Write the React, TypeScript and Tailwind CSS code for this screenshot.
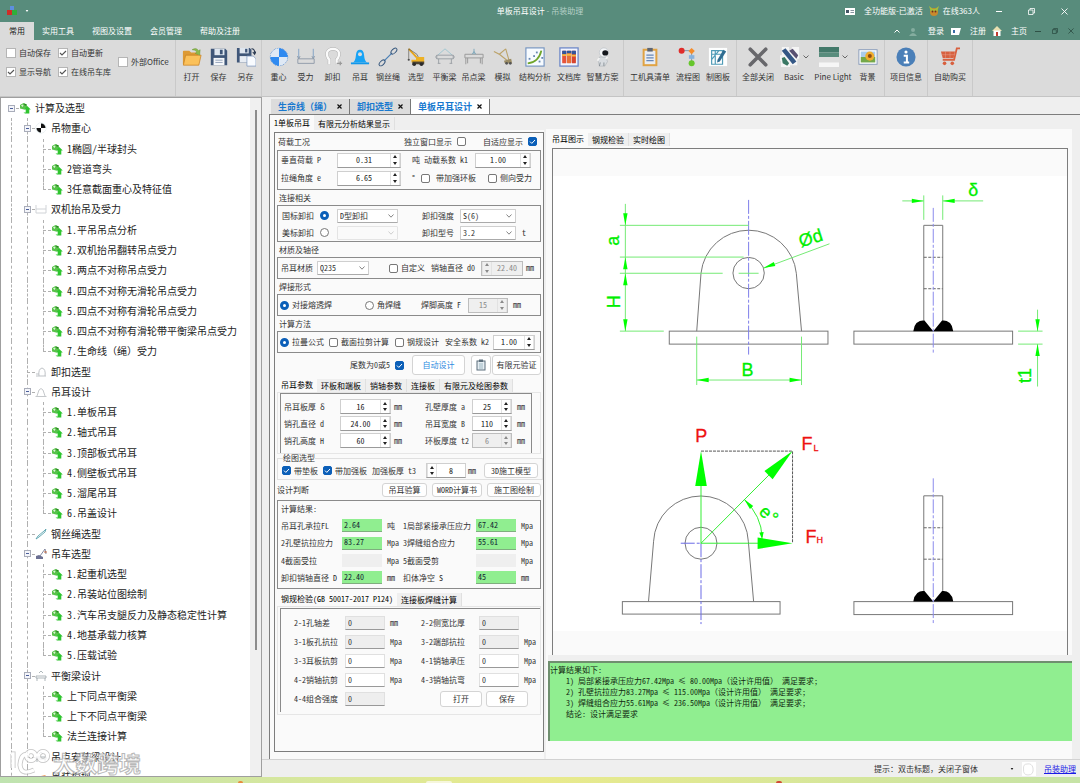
import React from "react";

type Kids = { children?: React.ReactNode };

/* ---------- ribbon icons (22 x 22 grid) ---------- */
const icons: Record<string, React.ReactNode> = {
  open: (
    <>
      <path d="M1 5 Q1 4 2 4 H8 L10 6 H18 V19 H1Z" fill="#dd9a34" />
      <path d="M4 9 H21 L18.500 20 H1.500Z" fill="#fbc15a" stroke="#c98222" strokeWidth=".8" />
      <path d="M11 3 Q16 0 18 4 L20 3 L19.500 9 L14.500 7 L16.500 5.500 Q14.500 3 11 3Z" fill="#8cba4e" stroke="#5d8a2c" strokeWidth=".4" />
    </>
  ),
  save: (
    <>
      <path d="M2 2 H18 L20 4 V20 H2Z" fill="#3f5678" />
      <rect x="6" y="2" width="11" height="7" fill="#dfe6ef" />
      <rect x="12" y="3" width="3" height="5" fill="#3f5678" />
      <rect x="5" y="12" width="12" height="8" fill="#f4f6f9" />
      <path d="M7 14.500 H15 M7 17 H15" stroke="#8fa0b8" />
    </>
  ),
  saveas: (
    <>
      <path d="M1 1 H15 L17 3 V17 H1Z" fill="#3f5678" />
      <rect x="4" y="1" width="10" height="6" fill="#dfe6ef" />
      <rect x="10" y="2" width="2.500" height="4" fill="#3f5678" />
      <rect x="4" y="10" width="9" height="7" fill="#e7ecf3" />
      <path d="M12 10 H19 L22 13 V21 H12Z" fill="#f8fbff" stroke="#7b95bd" strokeWidth=".8" />
      <path d="M17 2 Q21 2 20.500 7 M18.500 5.500 L20.500 8 L22 5" fill="none" stroke="#27364e" strokeWidth="1.200" />
    </>
  ),
  center: (
    <>
      <circle cx="11" cy="11" r="9.500" fill="#f2f6fb" stroke="#3f7fd0" strokeDasharray="2 1" />
      <path d="M11 11 V1.500 A9.500 9.500 0 0 0 1.500 11Z M11 11 V20.500 A9.500 9.500 0 0 0 20.500 11Z" fill="#dfe9f5" />
      <path d="M11 11 V1.500 A9.500 9.500 0 0 1 20.500 11Z M11 11 V20.500 A9.500 9.500 0 0 1 1.500 11Z" fill="#2f8af0" />
    </>
  ),
  force: (
    <g fill="none" stroke="#8d99a8" strokeWidth="1">
      <path d="M2 13 H20 V18 H2Z" />
      <path d="M3 2 V13 M19 2 V13" stroke="#7ea0c4" />
      <path d="M1.500 10 L3 13 L4.500 10 M17.500 10 L19 13 L20.500 10" />
    </g>
  ),
  shackle: (
    <>
      <path d="M7 19 V14 Q3.500 10 4.500 6 Q6 2 11 2 Q16 2 17.500 6 Q18.500 10 15 14 V19" fill="none" stroke="#b0b0b0" strokeWidth="3.600" />
      <path d="M7 19 V14 Q3.500 10 4.500 6 Q6 2 11 2 Q16 2 17.500 6 Q18.500 10 15 14 V19" fill="none" stroke="#fafafa" strokeWidth="2.600" />
      <path d="M15 18 H21 M19 16 V20" stroke="#9a9a9a" strokeWidth="1.500" />
    </>
  ),
  lug: (
    <>
      <path d="M1 17 H21 V19 H1Z" fill="#1297ea" />
      <path d="M3 17 Q6 16 6.500 9 Q7 3 11 3 Q15 3 15.500 9 Q16 16 19 17Z" fill="#18a3f5" />
      <circle cx="11" cy="8" r="2.200" fill="#dbdbdb" />
    </>
  ),
  rope: (
    <g fill="none" stroke="#36577d" strokeWidth="1.100">
      <path d="M6.500 15.500 L15.500 6.500" stroke="#4b7fb5" strokeWidth="1.400" />
      <ellipse cx="17.500" cy="4.500" rx="4" ry="2.200" transform="rotate(-45 17.500 4.500)" />
      <ellipse cx="4.500" cy="17.500" rx="4" ry="2.200" transform="rotate(-45 4.500 17.500)" />
    </g>
  ),
  crane: (
    <>
      <path d="M3 2 L15 15" stroke="#e7a51b" strokeWidth="2" />
      <path d="M3 2 L12 8 L15 14 M3 2 V13" stroke="#55534b" strokeWidth=".7" fill="none" />
      <path d="M6 14 H11 V11 H20 V17 H6Z" fill="#edb125" />
      <rect x="7" y="16" width="13" height="3" fill="#4d4536" />
      <circle cx="9" cy="19" r="2" fill="#2b2b2b" />
      <circle cx="17" cy="19" r="2" fill="#2b2b2b" />
      <circle cx="3" cy="14" r="1.200" fill="#4c4c4c" />
    </>
  ),
  beam: (
    <g fill="none" stroke="#989ea3">
      <path d="M3 9 L11 2 L19 9" stroke="#9cc5cf" />
      <path d="M2 9 H20 V13 H2Z M2 9 Q-.500 11 2 13 M20 9 Q22.500 11 20 13 M4 13 V18 M18 13 V18 M3 18 H6 M16 18 H19" />
    </g>
  ),
  pointbeam: (
    <g fill="none" stroke="#9b9b9b" strokeWidth="1.100">
      <path d="M1 8 H21 V12 H1Z M2 12 V19 M4 12 V18 M20 12 V19 M18 12 V18" />
      <path d="M11 2 V8 M9 8 L11 5 L13 8" stroke="#80a9bb" />
    </g>
  ),
  simulate: (
    <>
      <path d="M1 5 L7 8 L14 2 M7 8 L17 16 M14 2 L18 16" stroke="#bca36a" strokeWidth="1.200" fill="none" />
      <path d="M12 15 L20 13 L21 18 L13 18Z" fill="#9a8c65" />
      <circle cx="15" cy="18" r="1.500" fill="#545454" />
      <circle cx="19" cy="18" r="1.500" fill="#545454" />
    </>
  ),
  chart: (
    <>
      <rect x="1" y="1" width="20" height="20" fill="#f7fbff" stroke="#6e8fbd" strokeWidth="1.200" />
      <path d="M3 18 Q15 17 18 4" fill="none" stroke="#70a52c" strokeWidth="2" />
      <g fill="#6788b2">
        <rect x="4" y="12" width="2" height="2" /><rect x="9" y="9" width="2" height="2" />
        <rect x="12" y="5" width="2" height="2" /><rect x="15" y="15" width="2" height="2" />
        <rect x="18" y="11" width="2" height="2" />
      </g>
    </>
  ),
  library: (
    <>
      <rect x="1" y="1" width="20" height="20" fill="#f1f5ff" stroke="#6c87c7" strokeWidth="1.400" />
      <rect x="3.500" y="4" width="4.600" height="14" rx="1" fill="#e6543b" />
      <rect x="8.800" y="4" width="4.600" height="14" rx="1" fill="#e6703b" />
      <rect x="14" y="4" width="4.600" height="14" rx="1" fill="#d7452f" />
      <path d="M3.500 4 H8.100 V8 H3.500Z M8.800 4 H13.400 V7 H8.800Z M14 4 H18.600 V8 H14Z" fill="#31569e" />
      <path d="M3.500 9 H8.100 M8.800 8.500 H13.400 M14 9.500 H18.600" stroke="#f5ba42" strokeWidth="2" />
    </>
  ),
  robot: (
    <>
      <path d="M7 11 H14 L16 16 L13 21 H7 L6 16Z" fill="#d8dce0" stroke="#a7adb4" strokeWidth=".6" />
      <circle cx="12" cy="6" r="5" fill="#f4f6f8" stroke="#b2b8be" strokeWidth=".6" />
      <ellipse cx="13.500" cy="6.500" rx="3.300" ry="2.800" fill="#15181d" />
      <path d="M7 12 L5 15 M14 13 L16 11" stroke="#f3f3f3" strokeWidth="2" />
      <path d="M8 17 L7 21 M12 17 V21" stroke="#858c93" />
    </>
  ),
  clipboard: (
    <>
      <rect x="4" y="3" width="14" height="17" fill="#e9edf3" stroke="#e0a344" strokeWidth="2.200" />
      <rect x="8" y="1" width="6" height="4" fill="#5f6672" />
      <path d="M7 9 H15 M7 12 H15 M7 15 H15" stroke="#6788b8" strokeWidth="1.500" />
    </>
  ),
  flow: (
    <>
      <path d="M5 4 H15 V18" stroke="#7a8da5" fill="none" />
      <circle cx="4" cy="4" r="3.300" fill="#e02c2a" />
      <path d="M15 1 L18.500 4.500 L15 8 L11.500 4.500Z" fill="#f58c2b" />
      <rect x="12" y="9" width="6" height="4" fill="#86b2df" />
      <circle cx="15" cy="18" r="3.300" fill="#66c62c" />
    </>
  ),
  draft: (
    <>
      <rect x="1" y="1" width="20" height="20" fill="#fdfefe" />
      <path d="M4 4 H16 V19 H4Z M4 8 H16 M8 4 V19 M4 14 L12 4" fill="none" stroke="#4f9bb6" strokeWidth="1.300" />
      <path d="M17 3 L20 5 L13 16 L10 17 L10.500 14Z" fill="#2f6c91" />
    </>
  ),
  closeall: <path d="M2.500 2.500 L19.500 19.500 M19.500 2.500 L2.500 19.500" stroke="#68686c" strokeWidth="4" strokeLinecap="round" />,
  basic: (
    <>
      <path d="M2 0 H10 V3 H13 V0 H21 V13 H19 V20 H11 V22 H1 V15 H0 V9 H2Z" fill="#f5f5f5" />
      <path d="M2 4 L6 1.500 L18 16 L14 19Z" fill="#345785" />
      <path d="M10 4 L14 2 L20 9 L18 13Z" fill="#595071" />
      <path d="M2 12 L5 11 L10 18 L8 20.500 L3 18Z" fill="#3a7864" />
    </>
  ),
  theme: (
    <>
      <rect x="0" y="0" width="22" height="6" fill="#43796a" />
      <rect x="0" y="6" width="22" height="5" fill="#588c7c" />
      <rect x="0" y="11" width="22" height="6" fill="#dddddd" />
      <rect x="0" y="17" width="22" height="5" fill="#f6f6f6" />
    </>
  ),
  background: (
    <>
      <rect x="1" y="3" width="20" height="16" fill="#fff" stroke="#8296b7" />
      <rect x="3" y="5" width="16" height="6" fill="#a9ccec" />
      <rect x="3" y="11" width="16" height="6" fill="#74a84a" />
      <circle cx="13" cy="10" r="5" fill="#f0ad2e" />
      <circle cx="13" cy="10" r="2.200" fill="#8b4c16" />
    </>
  ),
  info: (
    <>
      <circle cx="11" cy="11" r="10.500" fill="#4a7fb8" />
      <circle cx="11" cy="5.500" r="1.700" fill="#fff" />
      <path d="M8.500 9.500 H12 V16 M8.500 17 H14.500" stroke="#fff" strokeWidth="2.200" fill="none" />
    </>
  ),
  cart: (
    <>
      <path d="M22 1.500 H18.500 L15.500 14 H3" fill="none" stroke="#d8603f" strokeWidth="2" />
      <path d="M1 5 H16.500 L15 12 H3Z" fill="#d8603f" />
      <path d="M1 8.500 H16 M6 5 V12 M11 5 V12" stroke="#e9a894" strokeWidth=".5" />
      <circle cx="5" cy="18" r="2" fill="#d8603f" />
      <circle cx="13.500" cy="18" r="2" fill="#d8603f" />
    </>
  ),
};

function Icon({ name }: { name: string }) {
  return (
    <svg viewBox="0 0 22 22" className="size-5" aria-hidden="true">
      {icons[name]}
    </svg>
  );
}

function Tool({ icon, label, width, menu }: { icon: string; label: string; width: string; menu?: boolean }) {
  return (
    <button type="button" className={`flex shrink-0 flex-col items-center gap-1 whitespace-nowrap ${width}`}>
      <span className="flex items-center gap-[3px]">
        <Icon name={icon} />
        {menu && (
          <svg viewBox="0 0 6 4" className="h-1 w-[6px]" aria-hidden="true">
            <path d="M.5 .5 L3 3 L5.500 .5" fill="none" stroke="#666" />
          </svg>
        )}
      </span>
      <span className="leading-[12px]">{label}</span>
    </button>
  );
}

const ToolGroup = ({ children }: Kids) => (
  <div className="flex items-start border-r border-[#c9c9c9] px-[3px] pt-[7px]">{children}</div>
);

function RibbonCheck({ id, label, on }: { id: string; label: string; on?: boolean }) {
  return (
    <span className="flex items-center gap-[3px] whitespace-nowrap">
      <span className="relative flex size-[10px]">
        <input id={id} type="checkbox" defaultChecked={on} className="peer size-[10px] appearance-none border border-[#b5b5b5] bg-white" />
        <svg viewBox="0 0 10 10" className="pointer-events-none absolute inset-0 hidden peer-checked:block" aria-hidden="true">
          <path d="M2 5 L4 7 L8 3" fill="none" stroke="#555" strokeWidth="1.100" />
        </svg>
      </span>
      <label htmlFor={id}>{label}</label>
    </span>
  );
}

/* ---------- form parts ---------- */
function L({ f, w = "", children }: { f: string; w?: string } & Kids) {
  return <label htmlFor={f} className={`shrink-0 whitespace-pre ${w}`}>{children}</label>;
}

const T = ({ w = "", children }: { w?: string } & Kids) => <span className={`shrink-0 whitespace-pre ${w}`}>{children}</span>;

function Num({ id, v, w, off, left }: { id: string; v: string; w: string; off?: boolean; left?: boolean }) {
  const tone = off ? "border-[#bdbdbd] bg-[#efefef] text-[#8a8a8a]" : "border-[#cfcfcf] border-b-[#9a9a9a] bg-white text-[#222]";
  return (
    <span className={`flex h-[15px] shrink-0 items-stretch border ${tone} ${left ? "flex-row-reverse" : ""} ${w}`}>
      <input id={id} type="text" defaultValue={v} disabled={off} className="w-0 min-w-0 flex-1 text-center" />
      <span className="flex w-[10px] flex-col border-x border-[#e2e2e2]">
        <button type="button" disabled={off} aria-label="增加" className="flex flex-1 items-center justify-center">
          <svg viewBox="0 0 4 3" className="h-[3px] w-1" aria-hidden="true"><path d="M0 3 L2 0 L4 3Z" fill="currentColor" /></svg>
        </button>
        <button type="button" disabled={off} aria-label="减少" className="flex flex-1 items-center justify-center">
          <svg viewBox="0 0 4 3" className="h-[3px] w-1" aria-hidden="true"><path d="M0 0 L2 3 L4 0Z" fill="currentColor" /></svg>
        </button>
      </span>
    </span>
  );
}

function Pick({ id, v, w, off }: { id: string; v: string; w: string; off?: boolean }) {
  return (
    <span className={`relative flex h-[14px] shrink-0 ${w}`}>
      <select id={id} disabled={off} className={`w-full appearance-none rounded-[1px] border pl-[2px] ${off ? "border-[#e4e4e4] bg-[#fafafa]" : "border-[#cfcfcf] border-b-[#aaa] bg-white"}`}>
        <option>{v}</option>
      </select>
      <svg viewBox="0 0 6 4" className={`pointer-events-none absolute top-[5px] right-1 h-1 w-[6px] ${off ? "text-[#c4c4c4]" : "text-[#666]"}`} aria-hidden="true">
        <path d="M.5 .5 L3 3.200 L5.500 .5" fill="none" stroke="currentColor" strokeWidth=".8" />
      </svg>
    </span>
  );
}

function Check({ id, on }: { id: string; on?: boolean }) {
  return (
    <span className="relative flex size-[9px] shrink-0">
      <input id={id} type="checkbox" defaultChecked={on} className="peer size-[9px] appearance-none rounded-[2px] border border-[#777] bg-white checked:border-[#0b5fb8] checked:bg-[#0b5fb8]" />
      <svg viewBox="0 0 9 9" className="pointer-events-none absolute inset-0 hidden peer-checked:block" aria-hidden="true">
        <path d="M2 4.600 L3.800 6.400 L7 3" fill="none" stroke="#fff" strokeWidth="1" />
      </svg>
    </span>
  );
}

function Radio({ id, name, on }: { id: string; name: string; on?: boolean }) {
  return (
    <input id={id} name={name} type="radio" defaultChecked={on} className="size-[9px] shrink-0 appearance-none rounded-full border border-[#777] bg-white checked:border-[3px] checked:border-[#0b5fb8]" />
  );
}

const Btn = ({ w, children }: { w: string } & Kids) => (
  <button type="button" className={`flex shrink-0 items-center justify-center whitespace-nowrap rounded-[3px] border border-[#d4d4d4] bg-white ${w}`}>{children}</button>
);

const Title = ({ children }: Kids) => <h3 className="flex h-[15px] items-center px-[2px]">{children}</h3>;

const Box = ({ children, className = "" }: { className?: string } & Kids) => (
  <div className={`border border-[#8a8a8a] ${className}`}>{children}</div>
);

const Row = ({ children, className = "h-[17px]" }: { className?: string } & Kids) => (
  <div className={`flex items-center ${className}`}>{children}</div>
);

function Tabs({ items, label }: { items: string[]; label: string }) {
  return (
    <div role="tablist" aria-label={label} className="flex h-[15px] items-end">
      {items.map((t, i) => (
        <button key={t} role="tab" type="button" aria-selected={i === 0} className={`whitespace-pre px-1 text-black ${i === 0 ? "h-[15px] bg-[#fafafa]" : "h-[13px] border-r border-[#e0e0e0] bg-[#efefef]"}`}>
          {t}
        </button>
      ))}
    </div>
  );
}

function Result({ id, v, w = "w-10" }: { id: string; v: string; w?: string }) {
  return (
    <input id={id} readOnly defaultValue={v} className={`h-[13px] shrink-0 pl-[2px] pb-[2px] text-[#123] ${w} ${v ? "border-b border-[#7fae7f] bg-[#90ee90]" : "bg-[#efefef]"}`} />
  );
}

function Plain({ id, w = "w-10", off }: { id: string; w?: string; off?: boolean }) {
  return (
    <input id={id} defaultValue="0" readOnly={off} className={`h-[14px] shrink-0 border border-[#e0e0e0] border-b-[#999] pl-[2px] ${w} ${off ? "bg-[#eeeeee]" : "bg-white"}`} />
  );
}

/* ---------- navigation tree ---------- */
type Node = { level: number; text: string; icon?: string; last?: boolean };
const leafs = (list: string[]): Node[] => list.map((text, i) => ({ level: 2, text, last: i === list.length - 1 }));
const tree: Node[] = [
  { level: 0, text: "计算及选型" },
  { level: 1, text: "吊物重心", icon: "cg" },
  ...leafs(["1椭圆/半球封头", "2管道弯头", "3任意截面重心及特征值"]),
  { level: 1, text: "双机抬吊及受力", icon: "force" },
  ...leafs(["1.平吊吊点分析", "2.双机抬吊翻转吊点受力", "3.两点不对称吊点受力", "4.四点不对称无滑轮吊点受力", "5.四点不对称有滑轮吊点受力", "6.四点不对称有滑轮带平衡梁吊点受力", "7.生命线（绳）受力"]),
  { level: 1, text: "卸扣选型", icon: "shackle", last: true },
  { level: 1, text: "吊耳设计", icon: "lug" },
  ...leafs(["1.单板吊耳", "2.轴式吊耳", "3.顶部板式吊耳", "4.侧壁板式吊耳", "5.溜尾吊耳", "6.吊盖设计"]),
  { level: 1, text: "钢丝绳选型", icon: "rope", last: true },
  { level: 1, text: "吊车选型", icon: "crane" },
  ...leafs(["1.起重机选型", "2.吊装站位图绘制", "3.汽车吊支腿反力及静态稳定性计算", "4.地基承载力核算", "5.压载试验"]),
  { level: 1, text: "平衡梁设计", icon: "beam" },
  ...leafs(["上下同点平衡梁", "上下不同点平衡梁", "法兰连接计算"]),
  { level: 1, text: "吊点安装梁设计", icon: "beam", last: true },
  { level: 1, text: "吊装模拟", icon: "sim", last: true },
];

function TreeIcon({ kind }: { kind?: string }) {
  return (
    <svg viewBox="0 0 12 12" className="size-3 shrink-0" aria-hidden="true">
      {!kind && (
        <>
          <path d="M1 3 L4.500 1 L8 2.500 V5 L5 7.500 L1 6.500Z" fill="#58c24a" />
          <path d="M2 3.500 L3.500 2.500 L4.500 3.500 L3.500 5Z" fill="#d9f3d4" />
          <path d="M5 1.500 L7.500 2.500 L6 4Z" fill="#267a22" />
          <path d="M8.200 4 L11.800 7.600 H10.300 V11.500 H6 L4.500 10.500 H6.700 V7.600 H4.800Z" fill="#2fc42f" />
        </>
      )}
      {kind === "cg" && (
        <>
          <circle cx="6" cy="6" r="5" fill="#fff" stroke="#c9dbe0" strokeWidth=".6" />
          <path d="M6 6 V1 A5 5 0 0 0 1 6Z M6 6 V11 A5 5 0 0 0 11 6Z" fill="#fff" />
          <path d="M6 6 V1.500 A4.500 4.500 0 0 1 10.500 6Z M6 6 V10.500 A4.500 4.500 0 0 1 1.500 6Z" fill="#111" />
        </>
      )}
      {kind === "force" && <path d="M1 2 V10 H11 V2 M1 6 H11" fill="none" stroke="#d0d3d7" />}
      {kind === "shackle" && <path d="M4 10 Q3 3 7 2 Q11 3 10 10 M1 10 H11 M1 8 H4" fill="none" stroke="#bfc3c7" />}
      {kind === "lug" && <path d="M.5 10.500 H11.500 M2 10 L4 4 Q6 1 8 4 L10 10" fill="none" stroke="#c5c8cb" />}
      {kind === "rope" && <path d="M1 11 L3 8 L9 3 L11 1 L10 4 L4 9Z" fill="none" stroke="#5aa3ae" strokeWidth=".9" />}
      {kind === "crane" && (
        <>
          <path d="M5 8 L10 1 L11 6" fill="none" stroke="#666b86" strokeWidth=".8" />
          <path d="M1 8 L4 7 L8 9 V11 H1Z" fill="#6b6f92" />
          <path d="M9 4 H12" stroke="#c9683d" />
        </>
      )}
      {kind === "beam" && <path d="M4 3 L6 1 L8 3 M1 6 H11 V8 H1Z M2 8 V11 M10 8 V11" fill="none" stroke="#8c9a9e" strokeWidth=".7" />}
      {kind === "sim" && <path d="M2 10 L6 5 L11 4 L7 8Z" fill="#f08a3a" />}
    </svg>
  );
}

const V = ({ short }: { short?: boolean }) => (
  <span className={`absolute top-0 left-1/2 border-l border-dashed border-[#b0b0b0] ${short ? "h-1/2" : "h-full"}`} />
);

function TreeRow({ n }: { n: Node }) {
  const expandable = n.level < 2 && !n.last;
  return (
    <li className="flex items-center whitespace-nowrap">
      {n.level > 0 && <span className="relative h-full w-4"><V /></span>}
      {n.level > 1 && <span className="relative h-full w-4"><V /></span>}
      <span className="relative flex h-full w-4 items-center justify-center">
        {n.level > 0 && <V short={n.level === 2 && n.last} />}
        <span className="absolute top-1/2 left-1/2 w-2 border-t border-dashed border-[#b0b0b0]" />
        {expandable && (
          <button type="button" aria-label={`折叠 ${n.text}`} className="relative flex size-[7px] items-center justify-center border border-[#a9adba] bg-[#f4f5fa]">
            <span className="h-px w-[3px] bg-[#4b5f9b]" />
          </button>
        )}
      </span>
      <TreeIcon kind={n.icon} />
      <a href="#" className="pl-1">{n.text}</a>
    </li>
  );
}

/* ---------- drawing ---------- */
function Tri({ x, y, a = 0, l = 12, h = 2.2 }: { x: number; y: number; a?: number; l?: number; h?: number }) {
  return <path d={`M0 0 L${-l} ${-h} L${-l} ${h}Z`} transform={`translate(${x} ${y}) rotate(${a})`} fill="#00ff00" />;
}

function SideView({ top, base }: { top: number; base: number }) {
  return (
    <g>
      <rect x="854.500" y={base} width="159" height="13" fill="none" stroke="#777" />
      <path d={`M924.500 ${base - 11} V${top} H943.500 V${base - 11}`} fill="none" stroke="#777" />
      <path d={`M924.500 ${top + 32} H943.500 M924.500 ${top + 63.500} H943.500`} stroke="#666" strokeDasharray="3 1.500" />
      <path d={`M914 ${base} Q915 ${base - 11} 925 ${base - 11} L934 ${base} L943 ${base - 11} Q953 ${base - 11} 954 ${base}Z`} fill="#000" />
      <path d={`M934 ${top - 17.500} V${base + 23}`} stroke="#8c8cec" strokeDasharray="14 2 3 2" />
    </g>
  );
}

function Drawing() {
  return (
    <svg viewBox="553 149 515 505" className="size-full" role="img" aria-label="吊耳图示" fontFamily='"Liberation Sans", Arial, sans-serif'>
      <rect x="553" y="175" width="515" height="456" fill="#fff" />
      <g fill="none" stroke="#777">
        <rect x="669.500" y="330.500" width="159" height="13" />
        <path d="M697 330.500 L701.300 272.500 A48 48 0 0 1 796.800 272.500 L802 330.500" />
        <circle cx="749" cy="272.300" r="15.700" />
        <rect x="622.500" y="601.500" width="158" height="12.500" />
        <path d="M648.700 601.500 L653.800 541 A47.500 47.500 0 0 1 748.700 541 L754 601.500" />
        <circle cx="701.300" cy="543" r="16" />
        <path d="M701.300 450.700 H793 V543" stroke="#555" strokeDasharray="3 1" />
      </g>
      <path d="M749 199 V354" stroke="#7d7dea" strokeDasharray="14 2 3 2" />
      <path d="M701.300 543 V624 M681 543 H701" stroke="#6a6ae6" strokeDasharray="14 2 3 2" />
      <SideView top={224.5} base={330.5} />
      <SideView top={495.5} base={601.5} />
      <g stroke="#74ea74" fill="none">
        <path d="M625.500 203 V330.500 M620 224.500 H749 M620 256.300 H744 M620 272.500 H723 M739 272.500 H759 M620 330.500 H664" />
        <path d="M697 336 V384.500 M802 336 V384.500 M697 379.500 H802" />
        <path d="M830 243 L764 267.500" />
        <path d="M903 200 H924.500 M943.500 200 H984 M924.500 194.500 V219 M943.500 194.500 V219" />
        <path d="M1038.500 309 V330.500 M1038.500 343.500 V386 M1019 330.500 H1043.500 M1019 343.500 H1043.500" />
        <path d="M701.300 543 V485 M701.300 543 H759 M701.300 543 L770 474" stroke="#35ee35" />
        <path d="M744.600 499 Q762 516 762.500 537" stroke="#35ee35" />
      </g>
      <Tri x={625.5} y={224.5} a={90} /><Tri x={625.5} y={256.5} a={-90} /><Tri x={625.5} y={272.5} a={-90} /><Tri x={625.5} y={330.5} a={90} />
      <Tri x={697} y={379.5} a={180} /><Tri x={802} y={379.5} />
      <Tri x={763.7} y={267.3} a={160} />
      <Tri x={924.5} y={200} /><Tri x={943.5} y={200} a={180} />
      <Tri x={1038.5} y={330.5} a={90} /><Tri x={1038.5} y={343.5} a={-90} />
      <Tri x={701.3} y={450.7} a={-90} l={35} h={5.8} />
      <Tri x={793} y={543} l={35} h={5.8} />
      <Tri x={793} y={450.7} a={-45} l={34} h={5.8} />
      <Tri x={744.6} y={499} a={-132} l={11} /><Tri x={762.5} y={539} a={85} l={7} />
      <g fill="#00ee00" stroke="#00ee00" strokeWidth=".3" fontSize="18" textAnchor="middle">
        <text transform="translate(619 240) rotate(-90)">a</text>
        <text transform="translate(620 301) rotate(-90)">H</text>
        <text x="748" y="375">B</text>
        <text transform="translate(813 243) rotate(-18)">Ød</text>
        <text x="974" y="195">δ</text>
        <text transform="translate(1032 375) rotate(-90)">t1</text>
        <text transform="translate(762 516) rotate(45)">e</text>
        <text transform="translate(769 522) rotate(45)">°</text>
      </g>
      <g fill="#ee1111" stroke="#ee1111" strokeWidth=".3" fontSize="18">
        <text x="695.500" y="442">P</text>
        <text x="802" y="450">F</text><text x="814" y="451" fontSize="9">L</text>
        <text x="806" y="543">F</text><text x="817" y="543" fontSize="9">H</text>
      </g>
    </svg>
  );
}

const docTabs = ["生命线（绳）", "卸扣选型", "单板吊耳设计"];

export default function App() {
  return (
    <div className='flex h-screen flex-col overflow-hidden bg-[#efefef] font-["Noto_Sans_CJK_SC",sans-serif] text-[8px] leading-[10px] text-[#333]'>
      {/* title bar */}
      <header className="bg-[#588c7c] text-white">
        <div className="grid h-[22px] grid-cols-[1fr_auto_1fr] items-center">
          <div className="flex items-center gap-2 pl-[7px]">
            <svg viewBox="0 0 10 10" className="size-[10px]" aria-hidden="true">
              <rect x="3" y="0" width="4" height="4" fill="#5d8fe0" /><rect x="0" y="4" width="5" height="5" fill="#cf2d28" /><rect x="5" y="4" width="5" height="5" fill="#2fae3a" />
            </svg>
            <svg viewBox="0 0 4 3" className="h-[2px] w-1" aria-hidden="true"><path d="M0 0 H4 L2 3Z" fill="#fff" /></svg>
          </div>
          <h1>单板吊耳设计 <span className="text-[#b6d0c7]">- 吊装助理</span></h1>
          <div className="flex items-center justify-end pr-3">
            <svg viewBox="0 0 10 7" className="mr-[9px] h-[7px] w-[10px]" aria-hidden="true"><rect width="10" height="7" fill="#fff" /><path d="M1 2 H4 V5 H1Z" fill="#456" /><path d="M5.500 2.500 H9 M5.500 4.500 H9" stroke="#567" strokeWidth=".7" /></svg>
            <span className="mr-[6px]">全功能版-已激活</span>
            <svg viewBox="0 0 10 10" className="mr-1 size-[10px]" aria-hidden="true"><circle cx="5" cy="6" r="4" fill="#c98a2c" /><path d="M0 0 L4 3 L6 3 L10 0 L8 6 L2 6Z" fill="#a5bd3c" /><circle cx="3.500" cy="5.500" r="1" fill="#7d221a" /><circle cx="6.500" cy="5.500" r="1" fill="#7d221a" /></svg>
            <span className="mr-4">在线363人</span>
            <button type="button" aria-label="最小化" className="mr-[26px] h-px w-[6px] bg-white" />
            <button type="button" aria-label="还原" className="mr-[26px]">
              <svg viewBox="0 0 7 7" className="size-[7px]"><path d="M2 2 V.5 H6.500 V5 H5 M.5 2 H5 V6.500 H.5Z" fill="none" stroke="#fff" strokeWidth=".8" /></svg>
            </button>
            <button type="button" aria-label="关闭">
              <svg viewBox="0 0 7 7" className="size-[7px]"><path d="M.5 .5 L6.500 6.500 M6.500 .5 L.5 6.500" stroke="#fff" strokeWidth=".9" /></svg>
            </button>
          </div>
        </div>
        <nav className="flex h-[18px] items-center">
          <a href="#" className="flex h-full w-[34px] items-center justify-center bg-[#dbdbdb] text-[#222]">常用</a>
          <a href="#" className="ml-2">实用工具</a>
          <a href="#" className="ml-[18px]">视图及设置</a>
          <a href="#" className="ml-[18px]">会员管理</a>
          <a href="#" className="ml-[18px]">帮助及注册</a>
          <span className="ml-auto flex items-center">
            <svg viewBox="0 0 6 4" className="mr-2 h-1 w-[6px]" aria-hidden="true"><path d="M.5 3.500 L3 1 L5.500 3.500" fill="none" stroke="#fff" /></svg>
            <svg viewBox="0 0 10 10" className="mr-[10px] size-[10px]" aria-hidden="true"><circle cx="5" cy="4" r="2" fill="#84ad9f" /><path d="M1 10 Q5 4 9 10Z" fill="#84ad9f" /></svg>
            <a href="#" className="mr-[7px]">登录</a>
            <svg viewBox="0 0 10 7" className="mr-[9px] h-[7px] w-[10px]" aria-hidden="true"><path d="M0 0 H10 L8 7 H0Z" fill="#fff" /><path d="M2 2 H4 V5 H2Z" fill="#3a6ea8" /></svg>
            <a href="#" className="mr-[6px]">注册</a>
            <svg viewBox="0 0 10 10" className="mr-[9px] size-[10px]" aria-hidden="true"><path d="M0 5 L5 0 L10 5Z" fill="#e8e0b0" /><rect x="1.500" y="4.500" width="7" height="5.500" fill="#fff" /><rect x="4" y="6" width="2" height="4" fill="#c23b2f" /></svg>
            <a href="#" className="mr-2">主页</a>
            <span className="mr-[11px] h-px w-[6px] bg-[#2f5146]" />
            <svg viewBox="0 0 7 7" className="mr-[10px] size-[6px]" aria-hidden="true"><path d="M2 2 V.5 H6.500 V5 H5 M.5 2 H5 V6.500 H.5Z" fill="none" stroke="#2f5146" /></svg>
            <svg viewBox="0 0 7 7" className="mr-[6px] size-[6px]" aria-hidden="true"><path d="M.5 .5 L6.500 6.500 M6.500 .5 L.5 6.500" stroke="#2f5146" /></svg>
          </span>
        </nav>
      </header>

      {/* ribbon */}
      <div className="flex h-[57px] shrink-0 border-b border-[#c4c4c4] bg-[#dbdbdb]">
        <div className="flex w-[176px] gap-[7px] border-r border-[#c9c9c9] pl-[6px]">
          <div className="flex flex-col gap-[9px] pt-2"><RibbonCheck id="autosave" label="自动保存" /><RibbonCheck id="shownav" label="显示导航" on /></div>
          <div className="flex flex-col gap-[9px] pt-2"><RibbonCheck id="autoupd" label="自动更新" on /><RibbonCheck id="cranelib" label="在线吊车库" on /></div>
          <div className="pt-[17px]"><RibbonCheck id="office" label="外部Office" /></div>
        </div>
        <div className="flex items-start border-r border-[#c9c9c9] px-[2px] pt-[7px]">
          <Tool icon="open" label="打开" width="w-[27px]" /><Tool icon="save" label="保存" width="w-[27px]" /><Tool icon="saveas" label="另存" width="w-[27px]" />
        </div>
        <ToolGroup>
          <Tool icon="center" label="重心" width="w-[27px]" /><Tool icon="force" label="受力" width="w-[27px]" /><Tool icon="shackle" label="卸扣" width="w-[27px]" />
          <Tool icon="lug" label="吊耳" width="w-7" /><Tool icon="rope" label="钢丝绳" width="w-7" /><Tool icon="crane" label="选型" width="w-7" />
          <Tool icon="beam" label="平衡梁" width="w-[29px]" /><Tool icon="pointbeam" label="吊点梁" width="w-[29px]" /><Tool icon="simulate" label="模拟" width="w-[29px]" />
          <Tool icon="chart" label="结构分析" width="w-9" /><Tool icon="library" label="文档库" width="w-8" /><Tool icon="robot" label="智慧方案" width="w-[35px]" />
        </ToolGroup>
        <ToolGroup>
          <Tool icon="clipboard" label="工机具清单" width="w-[46px]" /><Tool icon="flow" label="流程图" width="w-[30px]" /><Tool icon="draft" label="制图板" width="w-[30px]" />
        </ToolGroup>
        <ToolGroup>
          <Tool icon="closeall" label="全部关闭" width="w-9" /><Tool icon="basic" label="Basic" width="w-9" menu /><Tool icon="theme" label="Pine Light" width="w-[42px]" menu /><Tool icon="background" label="背景" width="w-[27px]" />
        </ToolGroup>
        <ToolGroup><Tool icon="info" label="项目信息" width="w-9" /></ToolGroup>
        <ToolGroup><Tool icon="cart" label="自助购买" width="w-[38px]" /></ToolGroup>
      </div>

      <div className="flex min-h-0 flex-1">
        {/* navigation */}
        <aside className="relative flex w-[262px] shrink-0 overflow-hidden border border-[#9f9f9f] bg-white">
          <ul className='grid h-[689px] flex-1 auto-rows-fr pl-[2px] font-["Noto_Sans_Mono_CJK_SC","Noto_Sans_CJK_SC",monospace] text-[10px] text-[#222]'>
            {tree.map((n) => <TreeRow key={n.text} n={n} />)}
          </ul>
          <div className="flex w-[11px] justify-center bg-[#f0f0f0] pt-3"><span className="h-[540px] w-[2px] bg-[#8d8d8d]" /></div>
          <div className="pointer-events-none absolute bottom-0 left-2 flex items-center gap-[2px] opacity-80">
            <svg viewBox="0 0 42 28" className="h-7 w-[42px]" aria-hidden="true">
              <g fill="none" stroke="#b5b5b5" strokeWidth="5"><path d="M2 6 H4 V20 M25 22 Q12 28 11 17 Q12 4 20 7" /><circle cx="22" cy="8" r="4.500" /><circle cx="34" cy="8" r="4.500" /></g>
              <g fill="none" stroke="#fff" strokeWidth="3.400"><path d="M2 6 H4 V20 M25 22 Q12 28 11 17 Q12 4 20 7" /><circle cx="22" cy="8" r="4.500" /><circle cx="34" cy="8" r="4.500" /></g>
            </svg>
            <span className="text-[22px] leading-[26px] font-bold text-white [-webkit-text-stroke:1px_#a8a8a8]">大数跨境</span>
          </div>
        </aside>

        {/* document area */}
        <main className='flex min-w-0 flex-1 flex-col font-["Noto_Sans_Mono_CJK_SC","Noto_Sans_CJK_SC",monospace]'>
          <div role="tablist" aria-label="文档" className="flex h-[17px] shrink-0 items-end pl-[9px]">
            {docTabs.map((t, i) => (
              <span key={t} className={`flex h-[15px] items-center gap-[5px] border-r border-[#777] px-[7px] text-[9px] font-bold ${i === 2 ? "bg-white" : "bg-[#dcdcdc]"}`}>
                <button role="tab" aria-selected={i === 2} type="button" className="text-[#1879cf]">{t}</button>
                <button type="button" aria-label={`关闭${t}`} className="text-black">
                  <svg viewBox="0 0 5 5" className="size-[5px]"><path d="M.5 .5 L4.500 4.500 M4.500 .5 L.5 4.500" stroke="#111" strokeWidth="1.200" /></svg>
                </button>
              </span>
            ))}
          </div>

          <div className="ml-[7px] flex min-h-0 flex-1 border-t border-l border-[#7d7d7d]">
            {/* calculation form */}
            <section className="flex w-[274px] shrink-0 flex-col bg-[#fafafa] pl-1">
              <div className="-ml-1 bg-[#efefef]"><Tabs label="视图" items={["1单板吊耳", "有限元分析结果显示"]} /></div>
              <form className="mt-[2px] mb-[7px] flex flex-1 flex-col border border-[#7d7d7d] px-[2px]">
                <Row className="h-[17px] pl-[1px]">
                  <T w="w-[126px]">荷载工况</T>
                  <L f="alone" w="w-[53px]">独立窗口显示</L><Check id="alone" />
                  <L f="fit" w="ml-[17px] w-[45px]">自适应显示</L><Check id="fit" on />
                </Row>
                <Box className="h-10 pl-[3px]">
                  <Row className="h-[18px]"><L f="p" w="w-14">垂直荷载 P</L><Num id="p" v="0.31" w="w-16" /><T w="ml-[11px] w-3">吨</T><L f="k1" w="w-[51px]">动载系数 k1</L><Num id="k1" v="1.00" w="w-[56px]" /></Row>
                  <Row className="h-[18px]"><L f="ang" w="w-14">拉绳角度 e</L><Num id="ang" v="6.65" w="w-16" /><T w="ml-[11px] w-[9px]">°</T><Check id="ring" /><L f="ring" w="ml-[6px] w-[52px]">带加强环板</L><Check id="side" /><L f="side" w="ml-[3px]">侧向受力</L></Row>
                </Box>
                <Title>连接相关</Title>
                <Box className="h-[37px] pt-[1px] pl-1">
                  <Row><L f="gb" w="w-[38px]">国标卸扣</L><Radio id="gb" name="std" on /><span className="w-[8px]" /><Pick id="shtype" v="D型卸扣" w="w-[61px]" /><L f="grade" w="ml-[24px] w-[38px]">卸扣强度</L><Pick id="grade" v="S(6)" w="w-[56px]" /></Row>
                  <Row><L f="us" w="w-[38px]">美标卸扣</L><Radio id="us" name="std" /><span className="w-[8px]" /><Pick id="ustype" v="" w="w-[61px]" off /><L f="model" w="ml-[24px] w-[38px]">卸扣型号</L><Pick id="model" v="3.2" w="w-[56px]" /><T w="ml-[6px]">t</T></Row>
                </Box>
                <Title>材质及轴径</Title>
                <Box className="h-[22px] pl-[3px]">
                  <Row className="h-5"><L f="mat" w="w-9">吊耳材质</L><Pick id="mat" v="Q235" w="w-[52px]" /><span className="w-5" /><Check id="custom" /><L f="custom" w="ml-[3px] w-[30px]">自定义</L><L f="d0" w="w-[50px]">销轴直径 d0</L><Num id="d0" v="22.40" w="w-[42px]" off left /><T w="ml-[3px]">mm</T></Row>
                </Box>
                <Title>焊接形式</Title>
                <Box className="h-[22px] pl-[2px]">
                  <Row className="h-5"><Radio id="butt" name="weld" on /><L f="butt" w="ml-[3px] w-[73px]">对接熔透焊</L><Radio id="fillet" name="weld" /><L f="fillet" w="ml-[3px] w-[44px]">角焊缝</L><L f="leg" w="w-[47px]">焊脚高度 F</L><Num id="leg" v="15" w="w-[40px]" off /><T w="ml-[5px]">mm</T></Row>
                </Box>
                <Title>计算方法</Title>
                <Box className="h-[22px] pl-[2px]">
                  <Row className="h-5"><Radio id="lame" name="method" on /><L f="lame" w="ml-[3px] w-[37px]">拉曼公式</L><Check id="shear" /><L f="shear" w="ml-[3px] w-[54px]">截面拉剪计算</L><Check id="steel" /><L f="steel" w="ml-[3px] w-[38px]">钢规设计</L><L f="k2" w="w-[48px]">安全系数 k2</L><Num id="k2" v="1.00" w="w-[42px]" /></Row>
                </Box>
                <Row className="h-6 justify-end">
                  <L f="tail" w="mr-[5px]">尾数为0或5</L><Check id="tail" on />
                  <button type="button" className="ml-2 h-5 w-[53px] rounded-[3px] border border-[#d4d4d4] bg-white text-[#2c8ae0]">自动设计</button>
                  <button type="button" aria-label="复制结果" className="ml-[6px] flex h-5 w-5 items-center justify-center rounded-[3px] border border-[#d4d4d4] bg-white">
                    <svg viewBox="0 0 10 12" className="h-3 w-[10px]"><rect x="1" y="2" width="8" height="9" fill="#e6eef3" stroke="#5d6f7c" /><rect x="3" y=".5" width="4" height="2.500" fill="#5d6f7c" /><path d="M3 5 H7 M3 7 H7 M3 9 H7" stroke="#7fa1b0" strokeWidth=".7" /></svg>
                  </button>
                  <Btn w="ml-[1px] h-5 w-[49px]">有限元验证</Btn>
                </Row>
                <Tabs label="参数" items={["吊耳参数", "环板和端板", "销轴参数", "连接板", "有限元及绘图参数"]} />
                <div className="border border-[#e6e6e6] px-[2px]">
                  <div className="mr-[6px] border-x border-t border-[#8a8a8a] py-1 pl-[3px]">
                    <Row><L f="t" w="w-[56px]">吊耳板厚 δ</L><Num id="t" v="16" w="w-[51px]" /><T w="ml-[3px] w-[31px]">mm</T><L f="a" w="w-[47px]">孔壁厚度 a</L><Num id="a" v="25" w="w-10" /><T w="ml-[5px]">mm</T></Row>
                    <Row><L f="d" w="w-[56px]">销孔直径 d</L><Num id="d" v="24.00" w="w-[51px]" /><T w="ml-[3px] w-[31px]">mm</T><L f="b" w="w-[47px]">吊耳宽度 B</L><Num id="b" v="110" w="w-10" /><T w="ml-[5px]">mm</T></Row>
                    <Row><L f="h" w="w-[56px]">销孔高度 H</L><Num id="h" v="60" w="w-[51px]" /><T w="ml-[3px] w-[31px]">mm</T><L f="t2" w="w-[47px]">环板厚度 t2</L><Num id="t2" v="6" w="w-10" off /><T w="ml-[5px]">mm</T></Row>
                  </div>
                </div>
                <fieldset className="h-[26px] border border-[#e0e0e0] px-1">
                  <legend className="ml-[1px] h-2 leading-2">绘图选型</legend>
                  <Row><Check id="pad" on /><L f="pad" w="ml-[3px] w-[29px]">带垫板</L><Check id="rib" on /><L f="rib" w="ml-[3px] w-[37px]">带加强板</L><L f="t3" w="w-[54px]">加强板厚 t3</L><Num id="t3" v="8" w="w-10" left /><T w="ml-[2px] w-4">mm</T><Btn w="h-[15px] w-[54px]">3D施工模型</Btn></Row>
                </fieldset>
                <Row className="h-5 justify-between">
                  <h3>设计判断</h3>
                  <span className="flex gap-[5px]"><Btn w="h-[14px] w-[45px]">吊耳验算</Btn><Btn w="h-[14px] w-[50px]">WORD计算书</Btn><Btn w="h-[14px] w-[54px]">施工图绘制</Btn></span>
                </Row>
                <Box className="pb-[2px] pl-[3px]">
                  <Row className="h-[16px]">计算结果:</Row>
                  <Row><L f="r1" w="w-[61px]">吊耳孔承拉FL</L><Result id="r1" v="2.64" /><T w="ml-[5px] w-4">吨</T><L f="r2" w="w-[73px]">1局部紧接承压应力</L><Result id="r2" v="67.42" /><T w="ml-[5px]">Mpa</T></Row>
                  <Row className="h-[18px]"><L f="r3" w="w-[61px]">2孔壁抗拉应力</L><Result id="r3" v="83.27" /><T w="ml-[5px] w-4">Mpa</T><L f="r4" w="w-[73px]">3焊缝组合应力</L><Result id="r4" v="55.61" /><T w="ml-[5px]">Mpa</T></Row>
                  <Row><L f="r5" w="w-[61px]">4截面受拉</L><Result id="r5" v="" /><T w="ml-[5px] w-4">Mpa</T><L f="r6" w="w-[73px]">5截面受剪</L><Result id="r6" v="" /><T w="ml-[5px]">Mpa</T></Row>
                  <Row><L f="r7" w="w-[61px]">卸扣销轴直径 D</L><Result id="r7" v="22.40" /><T w="ml-[5px] w-4">mm</T><L f="r8" w="w-[73px]">扣体净空 S</L><Result id="r8" v="45" /><T w="ml-[5px]">mm</T></Row>
                </Box>
                <div className="pt-[2px]"><Tabs label="检验" items={["钢规检验(GB 50017-2017 P124)", "连接板焊缝计算"]} /></div>
                <div className="border border-[#e6e6e6] pt-[1px] pb-[2px] pl-[2px]">
                  <div className="border-t border-l border-[#8a8a8a] py-1 pl-[13px]">
                    <Row className="h-[19px]"><L f="c1" w="w-[51px]">2-1孔轴差</L><Plain id="c1" off /><T w="ml-[5px] w-[31px]">mm</T><L f="c2" w="w-[58px]">2-2侧宽比厚</L><Plain id="c2" off /></Row>
                    <Row className="h-[19px]"><L f="c3" w="w-[51px]">3-1板孔抗拉</L><Plain id="c3" off /><T w="ml-[5px] w-[31px]">Mpa</T><L f="c4" w="w-[58px]">3-2端部抗拉</L><Plain id="c4" off /><T w="ml-[5px]">Mpa</T></Row>
                    <Row className="h-[19px]"><L f="c5" w="w-[51px]">3-3耳板抗剪</L><Plain id="c5" /><T w="ml-[5px] w-[31px]">Mpa</T><L f="c6" w="w-[58px]">4-1销轴承压</L><Plain id="c6" /><T w="ml-[5px]">Mpa</T></Row>
                    <Row className="h-[19px]"><L f="c7" w="w-[51px]">4-2销轴抗剪</L><Plain id="c7" /><T w="ml-[5px] w-[31px]">Mpa</T><L f="c8" w="w-[58px]">4-3销轴抗弯</L><Plain id="c8" /><T w="ml-[5px]">Mpa</T></Row>
                    <Row className="h-[19px]"><L f="c9" w="w-[51px]">4-4组合强度</L><Plain id="c9" off /><span className="w-[55px]" /><Btn w="h-4 w-[42px]">打开</Btn><Btn w="ml-1 h-4 w-[42px]">保存</Btn></Row>
                  </div>
                </div>
              </form>
            </section>

            {/* drawing and report */}
            <section className="flex min-w-0 flex-1 flex-col pt-[14px] pr-2 pl-[2px]">
              <div className="flex min-h-0 flex-1 flex-col bg-[#fafafa] pt-[2px] pl-[2px]">
                <Tabs label="图形" items={["吊耳图示", "钢规检验", "实时绘图"]} />
                <div className="mt-[2px] mr-1 ml-1 min-h-0 flex-1 border border-b-0 border-[#7d7d7d]"><Drawing /></div>
                <div className="h-[6px] bg-[#efefef]" />
                <pre className="mb-[18px] h-20 border-t-2 border-l-2 border-[#6f8f6f] bg-[#90ee90] pt-[1px] font-[inherit] leading-[11px] text-[#102810]">
{`计算结果如下:
    1) 局部紧接承压应力67.42Mpa ≤ 80.00Mpa（设计许用值） 满足要求;
    2) 孔壁抗拉应力83.27Mpa ≤ 115.00Mpa（设计许用值） 满足要求;
    3) 焊缝组合应力55.61Mpa ≤ 236.50Mpa（设计许用值） 满足要求;
    结论: 设计满足要求`}
                </pre>
              </div>
            </section>
          </div>

          <footer className='flex h-[18px] shrink-0 items-center justify-end border-t border-[#d2d2d2] pr-1 font-["Noto_Sans_CJK_SC",sans-serif]'>
            <span>提示：双击标题，关闭子窗体</span>
            <svg viewBox="0 0 4 3" className="ml-8 h-[2px] w-1" aria-hidden="true"><path d="M0 0 H4 L2 3Z" fill="#222" /></svg>
            <svg viewBox="0 0 14 14" className="mx-2 size-[14px]" aria-hidden="true"><rect width="14" height="14" fill="#fff" /><path d="M5 2 Q1 2 1.500 7 Q1 13 6 13 Q12 13 11 6 Q10 1 5 2Z" fill="none" stroke="#e0e0e0" /></svg>
            <a href="#" className="text-[#1a1ae6] underline">吊装助理</a>
          </footer>
        </main>
      </div>

      <div className="flex h-[6px] shrink-0 items-end bg-linear-to-r from-[#bfe3b0] via-[#e9ea8c] to-[#c6e3a6]">
        <span className="ml-[22%] h-[2px] w-[5px] rounded-t-full bg-[#e88a3c]" />
        <span className="ml-[17%] h-[2px] w-[26px] rounded-t-full bg-[#f6f6dc]" />
        <span className="ml-[30%] h-[2px] w-[6px] rounded-t-full bg-[#d04a34]" />
      </div>
    </div>
  );
}
